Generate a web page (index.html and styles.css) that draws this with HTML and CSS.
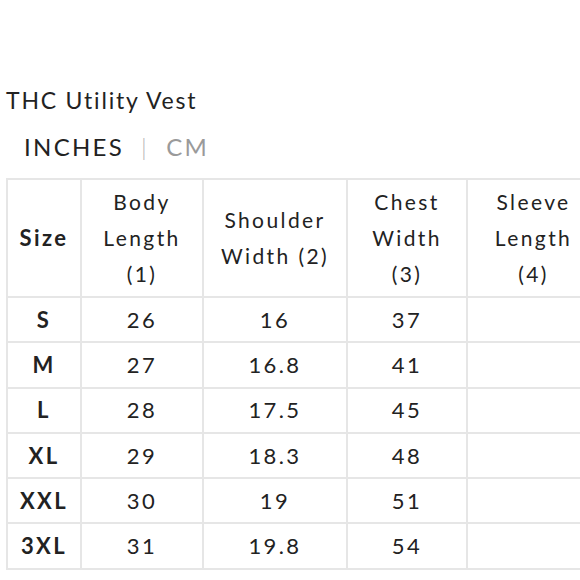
FILE: index.html
```html
<!DOCTYPE html>
<html>
<head>
<meta charset="utf-8">
<link rel="stylesheet" href="styles.css">
</head>
<body>
<div class="page">
  <h1 class="title">THC Utility Vest</h1>
  <div class="units">
    <span class="unit active">INCHES</span>
    <span class="sep">|</span>
    <span class="unit">CM</span>
  </div>
  <table class="chart">
    <colgroup>
      <col class="c1"><col class="c2"><col class="c3"><col class="c4"><col class="c5">
    </colgroup>
    <thead>
      <tr>
        <th class="size">Size</th>
        <th>Body<br>Length<br>(1)</th>
        <th>Shoulder<br>Width (2)</th>
        <th>Chest<br>Width<br>(3)</th>
        <th class="last">Sleeve<br>Length<br>(4)</th>
      </tr>
    </thead>
    <tbody>
      <tr><td class="size">S</td><td>26</td><td>16</td><td>37</td><td class="last"></td></tr>
      <tr><td class="size">M</td><td>27</td><td>16.8</td><td>41</td><td class="last"></td></tr>
      <tr><td class="size">L</td><td>28</td><td>17.5</td><td>45</td><td class="last"></td></tr>
      <tr><td class="size">XL</td><td>29</td><td>18.3</td><td>48</td><td class="last"></td></tr>
      <tr><td class="size">XXL</td><td>30</td><td>19</td><td>51</td><td class="last"></td></tr>
      <tr><td class="size">3XL</td><td>31</td><td>19.8</td><td>54</td><td class="last"></td></tr>
    </tbody>
  </table>
</div>
</body>
</html>
```
FILE: styles.css
```css
html, body {
  margin: 0;
  padding: 0;
  background: #ffffff;
  overflow: hidden;
}
body {
  font-family: "Lato", "Noto Sans", sans-serif;
  color: #222222;
  width: 580px;
}
.page {
  padding: 87px 0 0 6px;
}
.title {
  margin: 0;
  font-size: 23px;
  font-weight: 400;
  letter-spacing: 1.8px;
  line-height: 26px;
}
.units {
  margin: 20px 0 0 18px;
  font-size: 24px;
  letter-spacing: 2.3px;
  line-height: 28px;
  display: flex;
  gap: 17px;
}
.unit { color: #9a9a9a; }
.unit.active { color: #222222; }
.sep { color: #b5b5b5; font-weight: 300; }
.chart {
  margin-top: 17px;
  border-collapse: collapse;
  table-layout: fixed;
  width: 574px;
}
.c1 { width: 74px; }
.c2 { width: 122px; }
.c3 { width: 144px; }
.c4 { width: 120px; }
.c5 { width: 114px; }
.chart th, .chart td {
  border: 2px solid #e6e6e6;
  text-align: center;
  padding: 0;
  letter-spacing: 2.4px;
}
.chart .last {
  border-right: none;
  padding-left: 18px;
}
.chart th {
  font-size: 21px;
  font-weight: 400;
  line-height: 36px;
  height: 116px;
}
.chart td {
  font-size: 22px;
  line-height: 26px;
  height: 43.3px;
}
.chart .size {
  font-weight: 700;
  font-size: 22px;
  letter-spacing: 2.4px;
}
```
